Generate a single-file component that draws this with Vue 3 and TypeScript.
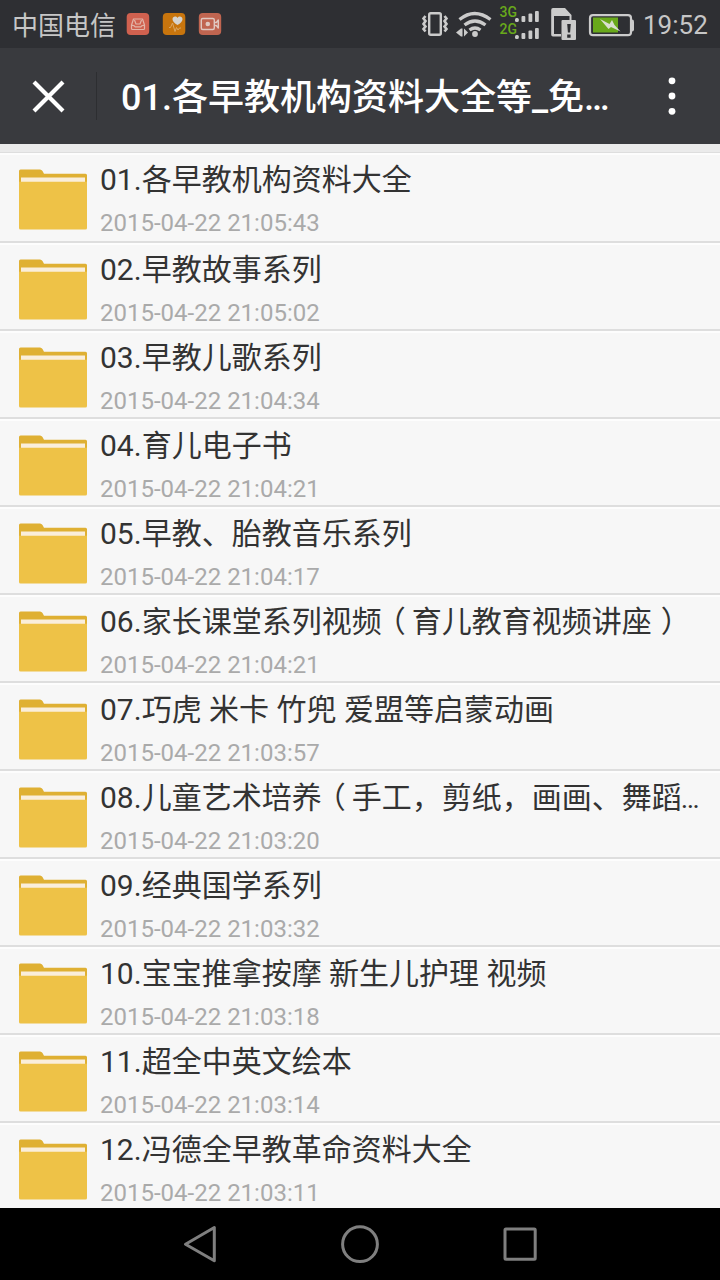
<script setup lang="ts">
interface FolderItem {
  name: string
  time: string
}

const folders: FolderItem[] = [
  { name: '01.各早教机构资料大全', time: '2015-04-22 21:05:43' },
  { name: '02.早教故事系列', time: '2015-04-22 21:05:02' },
  { name: '03.早教儿歌系列', time: '2015-04-22 21:04:34' },
  { name: '04.育儿电子书', time: '2015-04-22 21:04:21' },
  { name: '05.早教、胎教音乐系列', time: '2015-04-22 21:04:17' },
  { name: '06.家长课堂系列视频（育儿教育视频讲座）', time: '2015-04-22 21:04:21' },
  { name: '07.巧虎 米卡 竹兜 爱盟等启蒙动画', time: '2015-04-22 21:03:57' },
  { name: '08.儿童艺术培养（手工，剪纸，画画、舞蹈…', time: '2015-04-22 21:03:20' },
  { name: '09.经典国学系列', time: '2015-04-22 21:03:32' },
  { name: '10.宝宝推拿按摩 新生儿护理 视频', time: '2015-04-22 21:03:18' },
  { name: '11.超全中英文绘本', time: '2015-04-22 21:03:14' },
  { name: '12.冯德全早教革命资料大全', time: '2015-04-22 21:03:11' },
]

// Full-width brackets are split off so they can be centred in their cell.
const pieces = (name: string): string[] => name.split(/([（）…])/).filter(Boolean)

const classes: Record<string, string> = { '（': 'open', '）': 'close', '…': 'dots' }
const pieceClass = (piece: string): string => classes[piece] ?? 'run'
</script>

<template>
  <div class="screen">
    <div class="status">
      <span class="carrier">中国电信</span>
      <svg class="apps" width="96" height="48" viewBox="0 0 96 48">
        <rect x="0.7" y="13" width="22.5" height="22" rx="4" fill="#d0614f" />
        <g fill="none" stroke="#e2b5a8" stroke-width="1.2" stroke-linejoin="round">
          <path d="M7.500 19h9l2 6v3.500q0 1-1 1h-11q-1 0-1-1V25z" />
          <path d="M5.500 25.500q3-.3 3.500 1.300h6q.5-1.600 3.500-1.300M8.500 20l1.500 4h4l1.500-4" />
        </g>
        <rect x="36.800" y="13" width="22.500" height="22" rx="4" fill="#c8750d" />
        <path d="M51.500 25c-3-1.800-5-3.600-5-5.800 0-3 3.700-3.500 5-1.200 1.300-2.300 5-1.800 5 1.200 0 2.200-2 4-5 5.800z" fill="#d5d3cf" />
        <path d="M43 27.500h1.500l2-4.500 2.500 8.500 1.500-4 1.500 2.500 1.500-2h1.500" fill="none" stroke="#d9a664" stroke-width="1" />
        <g transform="translate(.8 0)">
          <rect x="72" y="13" width="22.400" height="22" rx="4" fill="#c06550" />
          <g fill="none" stroke="#e0c8c0" stroke-width="1.400" stroke-linejoin="round">
            <rect x="74.500" y="18.500" width="13" height="11" rx="1.500" />
            <path d="M87.500 22.500h2l2-2.500v8l-2-2.500h-2" />
          </g>
          <circle cx="81" cy="24" r="2.300" fill="#e0c8c0" />
        </g>
      </svg>
      <svg class="system" width="220" height="48" viewBox="418 0 220 48">
        <g fill="none" stroke="#cbcbcb">
          <rect x="429.200" y="13.200" width="11.600" height="21.600" rx="1.500" stroke-width="2.400" />
          <path d="M425.500 16l-2 2.500 2 2.500-2 3 2 2.500-2 2.500 2 2.500M444.500 16l2 2.500-2 2.500 2 3-2 2.500 2 2.500-2 2.500" stroke-width="2.600" />
          <path d="M459.500 19.500q15-12 31 0M464.500 25q10.500-8 21 0M469.500 30q5.500-4 11 0" stroke-width="3.300" />
        </g>
        <g fill="#cbcbcb">
          <circle cx="475" cy="34" r="2.900" />
          <path d="M456 32.500l5-4v8zM461 28.500h1.500v8h-1.500zM464 28.500l4 4-4 4z" />
          <rect x="515" y="18" width="3.800" height="4" rx="1.500" />
          <rect x="521.500" y="16" width="3.800" height="6" rx="1" />
          <rect x="528.500" y="13.500" width="3.800" height="8.500" rx="1" />
          <rect x="535" y="11" width="3.800" height="11" rx="1" />
          <rect x="515" y="35" width="3.800" height="4" rx="1.500" />
          <rect x="521.500" y="33" width="3.800" height="6" rx="1" />
          <rect x="528.500" y="30.500" width="3.800" height="8.500" rx="1" />
          <rect x="535" y="28" width="3.800" height="11" rx="1" />
          <path fill-rule="evenodd" d="M553 8h12l6.500 7v5h-2v-4h-15.500V34h7v2.500h-8q-1.800 0-1.800-1.800V10q0-2 1.800-2z" />
          <rect x="561.500" y="20" width="14.500" height="20" rx="1" />
        </g>
        <path d="M567.200 24h3.600l-.7 8.500h-2.200zM567.200 34.500h3.400v3.200h-3.400z" fill="#2e2f33" />
        <rect x="590" y="15.200" width="41" height="20" rx="3" fill="none" stroke="#cbcbcb" stroke-width="2.200" />
        <path d="M632 19.500q2 0 2 2v8q0 2-2 2z" fill="#cbcbcb" />
        <rect x="593" y="17.500" width="25" height="15" fill="#69a91b" />
        <path d="M600 19l9.500 5 2.500-4 2.500 5 6 6.500-9.500-4.500-2.500 2z" fill="#d8dfcf" />
        <g class="net" fill="#69a91b">
          <text x="499.500" y="17">3G</text>
          <text x="499.500" y="34">2G</text>
        </g>
      </svg>
      <span class="clock">19:52</span>
    </div>

    <header class="header">
      <svg class="x" width="96" height="96" viewBox="0 0 96 96">
        <path d="M34 34l29 29M63 34l-29 29" stroke="#fff" stroke-width="4.200" />
      </svg>
      <i class="divider"></i>
      <h1 class="title">01.各早教机构资料大全等_免…</h1>
      <svg class="more" width="96" height="96" viewBox="0 0 96 96">
        <circle cx="48" cy="32.800" r="3.400" fill="#fff" />
        <circle cx="48" cy="48" r="3.400" fill="#fff" />
        <circle cx="48" cy="63.300" r="3.400" fill="#fff" />
      </svg>
    </header>

    <main class="list">
      <div v-for="folder in folders" :key="folder.name" class="row">
        <svg class="folder" width="70" height="62" viewBox="0 0 70 62">
          <path d="M1 14V3Q1 1.500 2.500 1.500H22q1.500 0 2.500 1.500l1.500 2.700H67.500q1.500 0 1.500 1.500V14z" fill="#dfb033" />
          <rect x="3" y="9.500" width="64" height="5" fill="#faeedb" />
          <path d="M1 13.800h68v46.200q0 1.500-1.500 1.500h-65Q1 61.500 1 60z" fill="#eec247" />
        </svg>
        <div class="info">
          <div class="name"><span v-for="(piece, i) in pieces(folder.name)" :key="i" :class="pieceClass(piece)">{{ piece }}</span></div>
          <div class="time">{{ folder.time }}</div>
        </div>
      </div>
    </main>

    <nav class="nav">
      <svg width="720" height="72" viewBox="0 0 720 72" fill="none" stroke="#7f7f7f" stroke-width="3" stroke-linejoin="round">
        <path d="M185.500 36.200L214.300 19.500v33.300z" />
        <circle cx="360" cy="36.200" r="17.400" />
        <rect x="505" y="21" width="30.200" height="30.200" rx="1" />
      </svg>
    </nav>
  </div>
</template>

<style>
body {
  margin: 0;
  overflow: hidden;
}
</style>

<style scoped>
.screen {
  width: 720px;
  height: 1280px;
  display: flex;
  flex-direction: column;
  overflow: hidden;
  background: #f7f7f7;
  font-family: Roboto, "Noto Sans CJK SC", sans-serif;
}

.status {
  flex: none;
  height: 48px;
  display: flex;
  align-items: center;
  background: #2e2f33;
  color: #c6c6c6;
}

.carrier {
  width: 114px;
  padding: 4px 0 0 12px;
  font-size: 26px;
  line-height: 44px;
  white-space: nowrap;
}

.system {
  margin-left: 196px;
}

.clock {
  margin-left: 5px;
  font-size: 26px;
  line-height: 48px;
  padding-top: 2px;
}

.net {
  font: 500 14px Roboto, sans-serif;
}

.header {
  flex: none;
  height: 96px;
  display: flex;
  align-items: center;
  background: #393a3e;
  color: #fff;
}

.divider {
  width: 1px;
  height: 48px;
  background: #2d2e31;
}

.title {
  flex: 1;
  margin: 0;
  padding: 4px 0 0 24px;
  font-size: 36px;
  font-weight: 500;
  line-height: 92px;
  white-space: nowrap;
}

.list {
  flex: 1;
  min-height: 0;
  overflow: hidden;
  border-top: 8px solid #ebebeb;
  box-shadow: inset 0 1px #dedede;
  padding-top: 1px;
}

.row {
  box-sizing: border-box;
  height: 88px;
  display: flex;
  border-bottom: 2px solid #dedede;
  box-shadow: inset 0 2px #fdfdfd;
}

.row:first-child {
  height: 90px;
}

.folder {
  flex: none;
  margin: 15px 0 0 18px;
}

.info {
  margin-left: 12px;
  white-space: nowrap;
}

.name {
  height: 44px;
  margin-top: 5px;
  font-size: 30px;
  line-height: 44px;
  color: #333;
}

.open,
.close {
  box-sizing: border-box;
  display: inline-block;
  width: 30px;
  line-height: 30px;
  font-feature-settings: "halt";
}

.open {
  padding-left: 9px;
}

.close {
  padding-left: 9px;
}

.dots {
  font-size: 28px;
  margin-left: -1px;
}

.time {
  font-size: 24px;
  line-height: 30px;
  margin-top: 6px;
  color: #aaa;
}

.nav {
  flex: none;
  height: 72px;
  background: #000;
}

.nav svg,
.status svg,
.header svg {
  display: block;
  flex: none;
}
</style>
